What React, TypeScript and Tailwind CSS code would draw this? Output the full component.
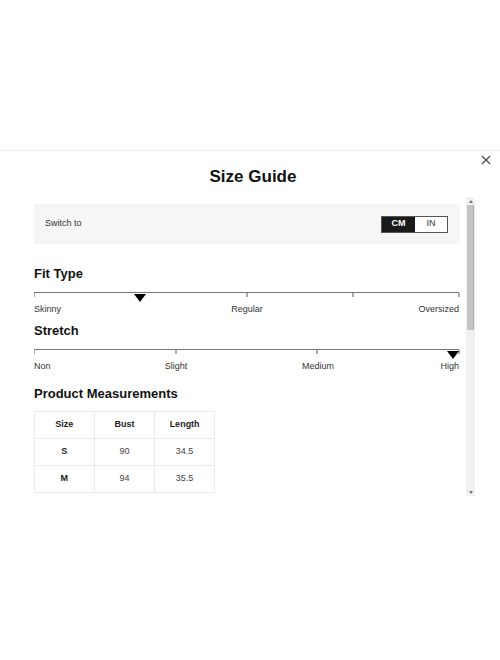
const fitTicks = [0, 50, 75, 100]
const stretchTicks = [0, 33.333, 66.667, 100]

const rows = [
  { size: 'S', bust: '90', length: '34.5' },
  { size: 'M', bust: '94', length: '35.5' },
]

function Scale({ ticks, pointer }: { ticks: number[]; pointer: number }) {
  return (
    <div className="relative h-[8px] border-t border-[#777]">
      {ticks.map((t) => (
        <span
          key={t}
          className="absolute top-0 w-px h-[4px] bg-[#555] -translate-x-1/2"
          style={{ left: `${t}%` }}
        />
      ))}
      <span
        className="absolute top-[1px] -translate-x-1/2 w-0 h-0 border-l-[6px] border-r-[6px] border-t-[8px] border-l-transparent border-r-transparent border-t-black"
        style={{ left: `${pointer}%` }}
      />
    </div>
  )
}

export default function App() {
  return (
    <div className="w-[500px] h-[660px] bg-white overflow-hidden text-[#222] font-['Liberation_Sans',Arial,sans-serif]">
      <div className="h-[150px]" />

      {/* Modal */}
      <div className="relative border-t border-[#ececec]">
        <button className="absolute right-[9px] top-[4px] w-[10px] h-[10px] text-[#444]">
          <svg viewBox="0 0 10 10" className="w-[10px] h-[10px]">
            <path d="M1 1 L9 9 M9 1 L1 9" stroke="currentColor" strokeWidth="1.1" />
          </svg>
        </button>

        <h2 className="pt-[16px] pl-[6px] text-center text-[17px] leading-[20px] font-bold text-[#111]">Size Guide</h2>

        <div className="mt-[10px] flex h-[300px]">
          {/* scrolling content */}
          <div className="ml-[34px] w-[426px] overflow-hidden">
            <div className="mt-[7px] h-[40px] bg-[#f6f6f6] flex items-center justify-between pl-[11px] pr-[12px]">
              <span className="text-[9px] text-[#333]">Switch to</span>
              <div className="flex h-[17px] w-[67px] border border-[#555] text-[9px]">
                <span className="w-[33px] bg-[#1a1a1a] text-white flex items-center justify-center font-bold">CM</span>
                <span className="flex-1 bg-white flex items-center justify-center text-[#333]">IN</span>
              </div>
            </div>

            <h3 className="mt-[22px] text-[13px] leading-[15px] font-bold text-[#111]">Fit Type</h3>
            <div className="mt-[11px] pr-[1px]">
              <Scale ticks={fitTicks} pointer={25} />
            </div>
            <div className="relative mt-[4px] h-[11px] text-[9px] leading-[11px] text-[#333]">
              <span className="absolute left-0">Skinny</span>
              <span className="absolute left-1/2 -translate-x-1/2">Regular</span>
              <span className="absolute right-[1px]">Oversized</span>
            </div>

            <h3 className="mt-[8px] text-[13px] leading-[15px] font-bold text-[#111]">Stretch</h3>
            <div className="mt-[11px] pr-[1px]">
              <Scale ticks={stretchTicks} pointer={98.6} />
            </div>
            <div className="relative mt-[4px] h-[11px] text-[9px] leading-[11px] text-[#333]">
              <span className="absolute left-0">Non</span>
              <span className="absolute left-1/3 -translate-x-1/2">Slight</span>
              <span className="absolute left-2/3 -translate-x-1/2">Medium</span>
              <span className="absolute right-[1px]">High</span>
            </div>

            <h3 className="mt-[14px] text-[13px] leading-[15px] font-bold text-[#111]">Product Measurements</h3>
            <table className="mt-[10px] w-[181px] border-collapse text-[9px] text-center">
              <thead>
                <tr className="h-[27px]">
                  <th className="w-[60px] border border-[#ebebeb] font-bold">Size</th>
                  <th className="w-[61px] border border-[#ebebeb] font-bold">Bust</th>
                  <th className="w-[60px] border border-[#ebebeb] font-bold">Length</th>
                </tr>
              </thead>
              <tbody>
                {rows.map((r) => (
                  <tr key={r.size} className="h-[27px]">
                    <td className="border border-[#ebebeb] font-bold">{r.size}</td>
                    <td className="border border-[#ebebeb] text-[#444]">{r.bust}</td>
                    <td className="border border-[#ebebeb] text-[#444]">{r.length}</td>
                  </tr>
                ))}
              </tbody>
            </table>
          </div>

          {/* scrollbar */}
          <div className="ml-[6px] w-[9px] h-[299px] bg-[#f1f1f1] flex flex-col items-center">
            <div className="h-[8px] flex items-center justify-center">
              <span className="w-0 h-0 border-l-[2px] border-r-[2px] border-b-[3px] border-l-transparent border-r-transparent border-b-[#777]" />
            </div>
            <div className="w-[7px] h-[125px] bg-[#c4c4c4] border-r border-[#aaa]" />
            <div className="flex-1" />
            <div className="h-[8px] flex items-center justify-center">
              <span className="w-0 h-0 border-l-[2px] border-r-[2px] border-t-[3px] border-l-transparent border-r-transparent border-t-[#777]" />
            </div>
          </div>
        </div>
      </div>
    </div>
  )
}
